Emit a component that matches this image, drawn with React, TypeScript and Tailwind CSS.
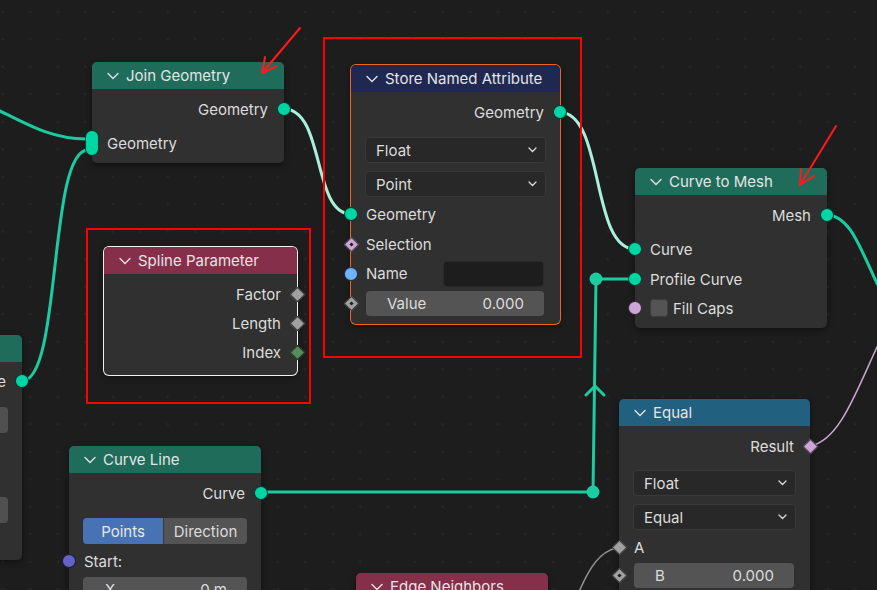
import type { ReactNode } from 'react';

type SocketKind =
  | 'geo'
  | 'bool'
  | 'bool-d'
  | 'bool-dot'
  | 'float'
  | 'float-dot'
  | 'int'
  | 'string'
  | 'vector'
  | 'pill';

function Socket({ kind, side }: { kind: SocketKind; side: 'left' | 'right' }) {
  const pos = side === 'left' ? 'left-[-7px]' : 'right-[-7px]';
  if (kind === 'pill') {
    return (
      <span className="absolute left-[-7px] top-1/2 h-[26px] w-[14px] -translate-y-1/2 rounded-full border border-black/70 bg-[#00d6a3]" />
    );
  }
  if (kind === 'geo' || kind === 'string' || kind === 'vector' || kind === 'bool') {
    const color =
      kind === 'geo'
        ? 'bg-[#00d6a3]'
        : kind === 'string'
          ? 'bg-[#70b2ff]'
          : kind === 'vector'
            ? 'bg-[#6363c7]'
            : 'bg-[#cca6d6]';
    return (
      <span
        className={`absolute ${pos} top-1/2 h-[14px] w-[14px] -translate-y-1/2 rounded-full border border-black/70 ${color}`}
      />
    );
  }
  const color =
    kind === 'int'
      ? 'bg-[#598c5c]'
      : kind === 'bool-dot' || kind === 'bool-d'
        ? 'bg-[#cca6d6]'
        : 'bg-[#a1a1a1]';
  const dot = kind === 'bool-dot' || kind === 'float-dot';
  return (
    <span
      className={`absolute ${pos} top-1/2 flex h-[14px] w-[14px] -translate-y-1/2 items-center justify-center`}
    >
      <span
        className={`flex h-[11px] w-[11px] shrink-0 rotate-45 items-center justify-center border border-black/60 ${color}`}
      >
        {dot && <span className="h-[3px] w-[3px] bg-[#1e1e1e]" />}
      </span>
    </span>
  );
}

function HeadChevron() {
  return (
    <svg width="12" height="8" viewBox="0 0 12 8" className="shrink-0">
      <path d="M1 1.5 L6 6.5 L11 1.5" stroke="#e2e2e2" strokeWidth="1.4" fill="none" strokeLinecap="round" />
    </svg>
  );
}

function SmallChevron() {
  return (
    <svg width="9" height="6" viewBox="0 0 9 6">
      <path d="M1 1 L4.5 4.5 L8 1" stroke="#d8d8d8" strokeWidth="1.3" fill="none" strokeLinecap="round" />
    </svg>
  );
}

function Node({
  pos,
  head,
  ring = '',
  title,
  children,
}: {
  pos: string;
  head: string;
  ring?: string;
  title: string;
  children: ReactNode;
}) {
  return (
    <div className={`absolute ${pos} rounded-[5px] bg-[#303030] shadow-[0_2px_6px_rgba(0,0,0,0.45)] ${ring}`}>
      <div className={`flex h-[27px] items-center gap-[7px] rounded-t-[5px] pl-[15px] ${head}`}>
        <HeadChevron />
        <span className="text-[15px] leading-none text-[#e4e4e4]">{title}</span>
      </div>
      <div className="flex flex-col">{children}</div>
    </div>
  );
}

function OutRow({ label, kind, h = 'h-[30px]' }: { label: string; kind: SocketKind; h?: string }) {
  return (
    <div className={`relative flex ${h} items-center justify-end pr-[16px]`}>
      <span className="text-[15px] leading-none text-[#dcdcdc]">{label}</span>
      <Socket kind={kind} side="right" />
    </div>
  );
}

function InRow({
  label,
  kind,
  h = 'h-[30px]',
  children,
}: {
  label?: string;
  kind?: SocketKind;
  h?: string;
  children?: ReactNode;
}) {
  return (
    <div className={`relative flex ${h} items-center pl-[15px] pr-[16px]`}>
      {kind && <Socket kind={kind} side="left" />}
      {label && <span className="text-[15px] leading-none text-[#dcdcdc]">{label}</span>}
      {children}
    </div>
  );
}

function Dropdown({ label, mt }: { label: string; mt: string }) {
  return (
    <div
      className={`${mt} mx-[14px] flex h-[26px] items-center justify-between rounded-[4px] border border-[#393939] bg-[#282828] pl-[10px] pr-[8px]`}
    >
      <span className="text-[15px] leading-none text-[#dcdcdc]">{label}</span>
      <SmallChevron />
    </div>
  );
}

function Field({ label, value }: { label: string; value: string }) {
  return (
    <div className="flex h-[25px] flex-1 items-center justify-between rounded-[4px] bg-[#545454] pl-[21px] pr-[20px]">
      <span className="text-[15px] leading-none text-[#dcdcdc]">{label}</span>
      <span className="text-[15px] leading-none text-[#dcdcdc]">{value}</span>
    </div>
  );
}

function Wires() {
  return (
    <svg className="absolute inset-0" width="877" height="590" viewBox="0 0 877 590">
      <g fill="none" strokeLinecap="round">
        <path d="M -70 85 C 0 100, 30 139, 86 139" stroke="#1ccba0" strokeWidth="3" />
        <path d="M 22 381 C 62 381, 48 150, 88 150" stroke="#1ccba0" strokeWidth="3" />
        <path d="M 284 109 C 325 109, 312 214, 351 214" stroke="#a9f0dc" strokeWidth="3" />
        <path d="M 559 112 C 605 112, 590 249, 635 249" stroke="#a9f0dc" strokeWidth="3" />
        <path d="M 826 215 C 854 215, 862 258, 888 305" stroke="#1ccba0" strokeWidth="3" />
        <path d="M 810 446 C 842 440, 858 385, 885 330" stroke="#c9a6d4" strokeWidth="1.5" />
        <path d="M 616 548 C 600 552, 590 566, 578 594" stroke="#8f8f8f" strokeWidth="1.5" />
        <path d="M 260 492 L 593 492 L 596 279 L 635 279" stroke="#1ccba0" strokeWidth="3" strokeLinejoin="round" />
        <path d="M 586 395 L 595 386 L 604 395" stroke="#1ccba0" strokeWidth="3" />
      </g>
      <circle cx="593" cy="492" r="6.5" fill="#1ccba0" />
      <circle cx="596" cy="279" r="6.5" fill="#1ccba0" />
    </svg>
  );
}

function Annotations() {
  return (
    <svg className="absolute inset-0" width="877" height="590" viewBox="0 0 877 590">
      <g stroke="#ff1a1a" strokeWidth="2" fill="none" strokeLinecap="round">
        <path d="M 300 28 L 262 73" />
        <path d="M 262 73 L 265 57 M 262 73 L 277 66" />
        <path d="M 836 126 L 800 185" />
        <path d="M 800 185 L 801 169 M 800 185 L 814 176" />
      </g>
    </svg>
  );
}

export default function App() {
  return (
    <div
      className="relative h-[590px] w-[877px] overflow-hidden bg-[#1d1d1d] bg-[radial-gradient(circle,#272727_1.2px,transparent_1.6px)] [background-position:-11px_-2px] [background-size:27.5px_27.5px]"
      style={{ fontFamily: 'Inter, "Noto Sans", sans-serif' }}
    >
      <Wires />

      {/* node cut off on the left edge */}
      <Node pos="left-[-170px] top-[335px] w-[192px]" head="bg-[#1f6c5b]" title="Curve">
        <div className="h-[4px]" />
        <OutRow label="Curve" kind="geo" />
        <div className="mx-[14px] mt-[11px] h-[26px] rounded-[4px] bg-[#505050]" />
        <div className="h-[64px]" />
        <div className="mx-[14px] h-[26px] rounded-[4px] bg-[#505050]" />
        <div className="h-[37px]" />
      </Node>

      <Node pos="left-[92px] top-[62px] w-[192px]" head="bg-[#1f6c5b]" title="Join Geometry">
        <div className="h-[5px]" />
        <OutRow label="Geometry" kind="geo" />
        <div className="h-[4px]" />
        <InRow label="Geometry" kind="pill" />
        <div className="h-[5px]" />
      </Node>

      <Node
        pos="left-[351px] top-[65px] w-[209px]"
        head="bg-[#1e2850]"
        ring="ring-1 ring-[#f0641c]"
        title="Store Named Attribute"
      >
        <div className="h-[5px]" />
        <OutRow label="Geometry" kind="geo" />
        <Dropdown label="Float" mt="mt-[10px]" />
        <Dropdown label="Point" mt="mt-[8px]" />
        <div className="h-[2px]" />
        <InRow label="Geometry" kind="geo" />
        <InRow label="Selection" kind="bool-dot" />
        <InRow label="Name" kind="string" h="h-[29px]">
          <div className="ml-auto h-[26px] w-[101px] rounded-[4px] border border-[#2a2a2a] bg-[#1d1d1d]" />
        </InRow>
        <InRow kind="float-dot">
          <Field label="Value" value="0.000" />
        </InRow>
        <div className="h-[6px]" />
      </Node>

      <Node
        pos="left-[104px] top-[247px] w-[193px]"
        head="bg-[#862f4b]"
        ring="ring-1 ring-[#f2f2f2]"
        title="Spline Parameter"
      >
        <div className="h-[6px]" />
        <OutRow label="Factor" kind="float" h="h-[29px]" />
        <OutRow label="Length" kind="float" h="h-[29px]" />
        <OutRow label="Index" kind="int" h="h-[29px]" />
        <div className="h-[8px]" />
      </Node>

      <Node pos="left-[635px] top-[168px] w-[192px]" head="bg-[#1f6c5b]" title="Curve to Mesh">
        <div className="h-[5px]" />
        <OutRow label="Mesh" kind="geo" />
        <div className="h-[4px]" />
        <InRow label="Curve" kind="geo" />
        <InRow label="Profile Curve" kind="geo" />
        <InRow kind="bool" h="h-[28px]">
          <span className="mr-[5px] h-[18px] w-[18px] rounded-[3px] border border-[#3c3c3c] bg-[#545454]" />
          <span className="text-[15px] leading-none text-[#dcdcdc]">Fill Caps</span>
        </InRow>
        <div className="h-[6px]" />
      </Node>

      <Node pos="left-[619px] top-[399px] w-[191px]" head="bg-[#22607f]" title="Equal">
        <div className="h-[5px]" />
        <OutRow label="Result" kind="bool-d" />
        <Dropdown label="Float" mt="mt-[9px]" />
        <Dropdown label="Equal" mt="mt-[8px]" />
        <div className="h-[2px]" />
        <InRow label="A" kind="float" />
        <InRow kind="float-dot" h="h-[27px]">
          <Field label="B" value="0.000" />
        </InRow>
        <div className="h-[40px]" />
      </Node>

      <Node pos="left-[69px] top-[446px] w-[192px]" head="bg-[#1f6c5b]" title="Curve Line">
        <div className="h-[5px]" />
        <OutRow label="Curve" kind="geo" />
        <div className="mx-[14px] mt-[10px] flex h-[26px] overflow-hidden rounded-[4px]">
          <span className="flex w-[80px] items-center justify-center bg-[#4772b3] text-[15px] leading-none text-[#e8e8e8]">
            Points
          </span>
          <span className="flex flex-1 items-center justify-center border-l border-[#3a3a3a] bg-[#545454] text-[15px] leading-none text-[#dcdcdc]">
            Direction
          </span>
        </div>
        <div className="h-[3px]" />
        <InRow label="Start:" kind="vector" h="h-[28px]" />
        <div className="mx-[14px] mt-[2px] flex h-[25px] items-center justify-between rounded-t-[4px] bg-[#545454] pl-[22px] pr-[20px] text-[15px] leading-none text-[#dcdcdc]">
          <span>X</span>
          <span>0 m</span>
        </div>
        <div className="mx-[14px] mt-px flex h-[25px] items-center justify-between bg-[#545454] pl-[22px] pr-[20px] text-[15px] leading-none text-[#dcdcdc]">
          <span>Y</span>
          <span>0 m</span>
        </div>
        <div className="h-[30px]" />
      </Node>

      <Node pos="left-[356px] top-[573px] w-[192px]" head="bg-[#862f4b]" title="Edge Neighbors">
        <div className="h-[60px]" />
      </Node>

      <div className="absolute left-[323px] top-[37px] h-[321px] w-[259px] border-2 border-[#ff0000]" />
      <div className="absolute left-[86px] top-[228px] h-[176px] w-[225px] border-2 border-[#ff0000]" />
      <Annotations />
    </div>
  );
}
